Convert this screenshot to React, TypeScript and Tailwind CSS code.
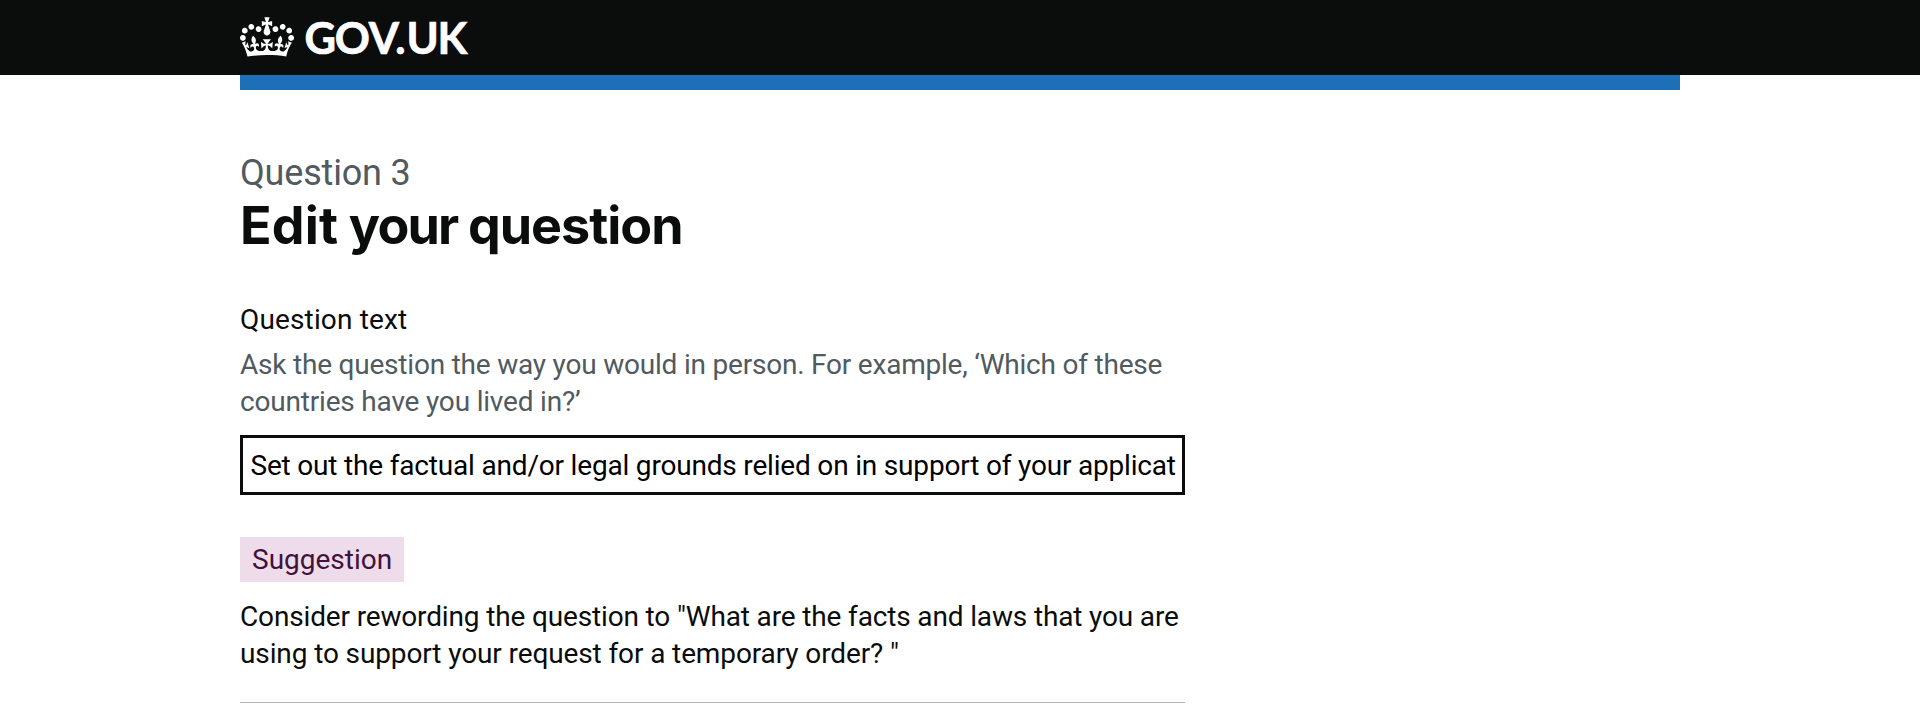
function Crown() {
  return (
    <svg className="block h-[40px] w-[54px] fill-white" viewBox="0 0 132 97" aria-hidden="true">
      <path d="M25 30.2c3.5 1.5 7.7-.2 9.1-3.7 1.5-3.6-.2-7.8-3.9-9.2-3.6-1.4-7.6.3-9.1 3.9-1.4 3.5.3 7.5 3.9 9zM9 39.5c3.6 1.5 7.8-.2 9.2-3.7 1.5-3.6-.2-7.8-3.9-9.1-3.6-1.5-7.6.2-9.1 3.8-1.4 3.5.3 7.5 3.8 9zM4.4 57.2c3.5 1.5 7.7-.2 9.1-3.8 1.5-3.6-.2-7.7-3.9-9.1-3.5-1.5-7.6.3-9.1 3.8-1.4 3.5.3 7.6 3.9 9.1zm38.3-21.4c3.5 1.5 7.7-.2 9.1-3.8 1.5-3.6-.2-7.7-3.9-9.1-3.6-1.5-7.6.3-9.1 3.8-1.3 3.6.4 7.7 3.9 9.1zm64.4-5.6c-3.6 1.5-7.8-.2-9.1-3.7-1.5-3.6.2-7.8 3.8-9.2 3.6-1.4 7.7.3 9.2 3.9 1.3 3.5-.4 7.5-3.9 9zm15.9 9.3c-3.6 1.5-7.7-.2-9.1-3.7-1.5-3.6.2-7.8 3.7-9.1 3.6-1.5 7.7.2 9.2 3.8 1.5 3.5-.3 7.5-3.8 9zm4.7 17.7c-3.6 1.5-7.8-.2-9.2-3.8-1.5-3.6.2-7.7 3.9-9.1 3.6-1.5 7.7.3 9.2 3.8 1.3 3.5-.4 7.6-3.9 9.1zM89.3 35.8c-3.6 1.5-7.8-.2-9.2-3.8-1.4-3.6.2-7.7 3.9-9.1 3.6-1.5 7.7.3 9.2 3.8 1.4 3.6-.3 7.7-3.9 9.1zM69.7 17.7l8.9 4.7V9.3l-8.9 2.8c-.2-.3-.5-.6-.9-.9L72.4 0H59.6l3.5 11.2c-.3.3-.6.5-.9.9l-8.8-2.8v13.1l8.8-4.7c.3.3.6.7.9.9l-5 15.4v.1c-.2.8-.4 1.6-.4 2.4 0 4.1 3.1 7.5 7 8.1h.2c.3 0 .7.1 1 .1.4 0 .7 0 1-.1h.2c4-.6 7.1-4.1 7.1-8.1 0-.8-.1-1.7-.4-2.4V34l-5.1-15.4c.4-.2.7-.6 1-.9zM66 92.8c16.9 0 32.8 1.1 47.1 3.2 4-16.9 8.9-26.7 14-33.5l-9.6-3.4c1 4.9 1.1 7.2 0 10.2-1.5-1.4-3-4.3-4.2-8.7L108.6 76c2.8-2 5-3.2 7.5-3.3-4.4 9.4-10 11.9-13.6 11.2-4.3-.8-6.3-4.6-5.6-7.9 1-4.7 5.7-5.9 8-.5 4.3-8.7-3-11.4-7.6-8.8 7.1-7.2 7.9-13.5 2.1-21.1-8 6.1-8.1 12.3-4.5 20.8-4.7-5.4-12.1-2.5-9.5 6.2 3.4-5.2 7.9-2 7.2 3.1-.6 4.3-6.4 7.8-13.5 7.2-10.3-.9-10.9-8-11.2-13.8 2.5-.5 7.1 1.8 11 7.3L80.2 60c-4.1 4.4-8 5.3-12.3 5.4 1.4-4.4 8-11.6 8-11.6H55.5s6.4 7.2 7.9 11.6c-4.2-.1-8-1-12.3-5.4l1.4 16.4c3.9-5.5 8.5-7.7 10.9-7.3-.3 5.8-.9 12.8-11.1 13.8-7.2.6-12.9-2.9-13.5-7.2-.7-5 3.8-8.3 7.1-3.1 2.7-8.7-4.6-11.6-9.4-6.2 3.7-8.5 3.6-14.7-4.6-20.8-5.8 7.6-5 13.9 2.2 21.1-4.7-2.6-11.9.1-7.7 8.8 2.3-5.5 7.1-4.2 8.1.5.7 3.3-1.3 7.1-5.7 7.9-3.5.7-9-1.8-13.5-11.2 2.5.1 4.7 1.3 7.5 3.3l-4.7-15.4c-1.2 4.4-2.7 7.2-4.3 8.7-1.1-3-.9-5.3 0-10.2l-9.5 3.4c5 6.9 9.9 16.7 14 33.5 14.8-2.1 30.8-3.2 47.7-3.2z" />
    </svg>
  );
}

export default function App() {
  return (
    <div className="h-[715px] overflow-hidden bg-white font-['Roboto',sans-serif] text-[28px] leading-[37.5px] text-[#0b0c0c]">
      <header className="h-[75px] bg-[#0b0c0c]">
        <div className="mx-auto flex w-[1440px] items-start pt-[17px]">
          <Crown />
          <span className="ml-[10.5px] -mt-[2px] whitespace-nowrap font-['Lato',sans-serif] text-[43.5px] font-bold leading-[44px] tracking-[-1.3px] text-white [-webkit-text-stroke:0.7px_white]">
            GO<span className="tracking-[-3.6px]">V</span>
            <span className="tracking-[0.8px]">.</span>UK
          </span>
        </div>
      </header>
      <div className="mx-auto h-[15px] w-[1440px] bg-[#1d70b8]" />

      <main className="mx-auto w-[1440px] pt-[61px]">
        <div className="w-[945px] whitespace-nowrap">
          <h1 className="mb-[45px] font-['Inter',sans-serif] text-[52px] font-bold leading-[60px] tracking-[-0.98px]">
            <span className="block font-['Roboto',sans-serif] text-[36px] font-normal leading-[45px] tracking-[-0.18px] text-[#505a5f]">
              Question 3
            </span>
            <span className="tracking-[0.2px]">Edit</span>
            <span className="tracking-[-1.8px]"> your </span>
            <span className="tracking-[-1px]">question</span>
          </h1>

          <label htmlFor="question" className="mb-[7px] block tracking-[0.15px]">
            Question text
          </label>
          <div className="mb-[14.5px] text-[#505a5f]">
            <span className="block tracking-[-0.21px]">
              Ask the question the way you would in person. For example, ‘Which of these
            </span>
            <span className="block tracking-[-0.19px]">countries have you lived in?’</span>
          </div>
          <div
            id="question"
            className="h-[60px] overflow-hidden border-3 border-[#0b0c0c] pl-[7.5px] leading-[55px] tracking-[-0.185px] text-black"
          >
            Set out the factual and/or legal grounds relied on in support of your applicat
          </div>

          <strong className="mt-[42px] block h-[45px] w-[164px] bg-[#eedcea] pl-[12px] font-normal leading-[45px] text-[#42123d]">
            Suggestion
          </strong>
          <p className="mt-[15.5px]">
            <span className="block tracking-[-0.15px]">
              Consider rewording the question to "What are the facts and laws that you are
            </span>
            <span className="block tracking-[-0.115px]">using to support your request for a temporary order? "</span>
          </p>
          <hr className="mt-[29.5px] border-0 border-t border-[#b1b4b6]" />
        </div>
      </main>
    </div>
  );
}
